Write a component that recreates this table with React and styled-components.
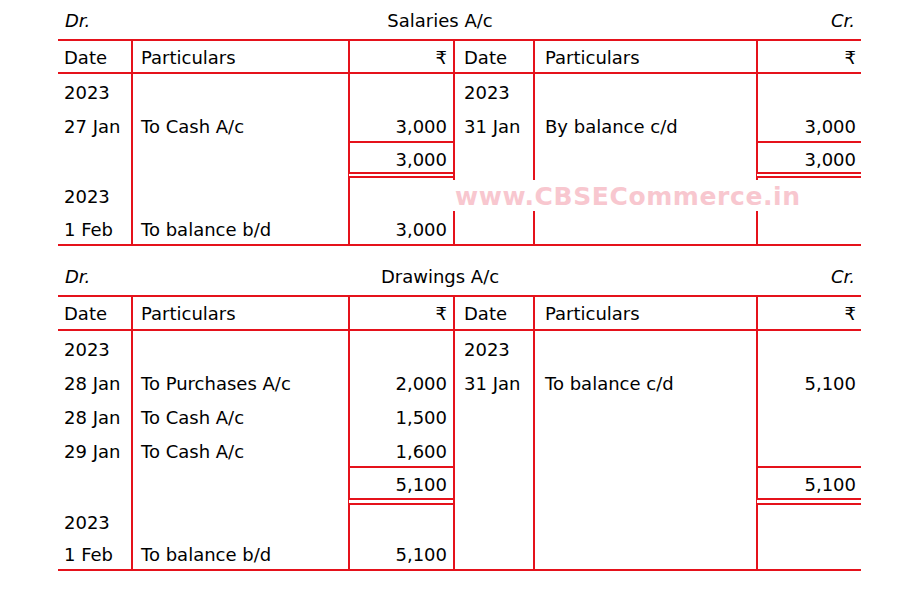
import React from 'react'
import styled, { createGlobalStyle } from 'styled-components'

const RED = '#e5121b'

const GlobalStyle = createGlobalStyle`
  html, body {
    margin: 0;
    padding: 0;
    background: #fff;
  }
  body {
    font-family: 'DejaVu Sans', 'Noto Sans', sans-serif;
    color: #000;
  }
`

const Page = styled.div`
  width: 912px;
  height: 589px;
  box-sizing: border-box;
  padding: 2px 0 0 58px;
  background: #fff;
`

const Ledger = styled.section`
  width: 803px;
  margin-bottom: ${p => p.$gap || 0}px;
`

const TitleRow = styled.div`
  display: grid;
  grid-template-columns: 1fr auto 1fr;
  align-items: center;
  height: 37px;
  font-size: 18px;
`

const SideLabel = styled.span`
  font-style: italic;
  padding: ${p => (p.$right ? '0 6px 0 0' : '0 0 0 7px')};
  text-align: ${p => (p.$right ? 'right' : 'left')};
`

const Title = styled.span`
  padding-right: 39px;
`

const Grid = styled.div`
  position: relative;
  display: grid;
  grid-template-columns: 73px 217px 105px 80px 223px 105px;
  grid-template-rows: ${p => p.$rows.map(r => r + 'px').join(' ')};
  border-top: 2px solid ${RED};
  border-bottom: 2px solid ${RED};
  font-size: 18px;
`

const Cell = styled.div`
  box-sizing: border-box;
  display: flex;
  align-items: center;
  justify-content: ${p => (p.$num ? 'flex-end' : 'flex-start')};
  padding: ${p => (p.$head ? 1 : 3)}px ${p => p.$pr || 0}px 0 ${p => p.$pl || 0}px;
  border-left: ${p => (p.$first ? 'none' : `2px solid ${RED}`)};
  border-top: ${p => (p.$total ? `2px solid ${RED}` : 'none')};
  border-bottom: ${p =>
    p.$head ? `2px solid ${RED}` : p.$total ? `${p.$double}px double ${RED}` : 'none'};
  white-space: nowrap;
`

// sits over the table lines, so it blanks them with a white box
const Watermark = styled.div`
  position: absolute;
  left: 394px;
  top: 139px;
  box-sizing: border-box;
  height: 31px;
  padding: 3px 3px 0;
  line-height: 28px;
  background: #fff;
  color: #f8c7cf;
  font-family: 'DejaVu Sans', sans-serif;
  font-weight: bold;
  font-size: 25px;
  letter-spacing: 0.6px;
`

// column paddings / alignment, left side then right side
const COLS = [
  { pl: 6 },
  { pl: 8 },
  { pr: 6, num: true },
  { pl: 9 },
  { pl: 10 },
  { pr: 5, num: true },
]

const HEADER = ['Date', 'Particulars', '₹', 'Date', 'Particulars', '₹']

const salaries = {
  title: 'Salaries A/c',
  double: 6,
  rows: [
    { h: 33, head: true, cells: HEADER },
    { h: 34, cells: ['2023', '', '', '2023', '', ''] },
    { h: 33, cells: ['27 Jan', 'To Cash A/c', '3,000', '31 Jan', 'By balance c/d', '3,000'] },
    { h: 37, total: true, cells: ['', '', '3,000', '', '', '3,000'] },
    { h: 33, cells: ['2023', '', '', '', '', ''] },
    { h: 33, cells: ['1 Feb', 'To balance b/d', '3,000', '', '', ''] },
  ],
}

const drawings = {
  title: 'Drawings A/c',
  double: 7,
  rows: [
    { h: 34, head: true, cells: HEADER },
    { h: 34, cells: ['2023', '', '', '2023', '', ''] },
    { h: 34, cells: ['28 Jan', 'To Purchases A/c', '2,000', '31 Jan', 'To balance c/d', '5,100'] },
    { h: 34, cells: ['28 Jan', 'To Cash A/c', '1,500', '', '', ''] },
    { h: 33, cells: ['29 Jan', 'To Cash A/c', '1,600', '', '', ''] },
    { h: 39, total: true, cells: ['', '', '5,100', '', '', '5,100'] },
    { h: 32, cells: ['2023', '', '', '', '', ''] },
    { h: 32, cells: ['1 Feb', 'To balance b/d', '5,100', '', '', ''] },
  ],
}

function Account({ data, gap, children }) {
  return (
    <Ledger $gap={gap}>
      <TitleRow>
        <SideLabel>Dr.</SideLabel>
        <Title>{data.title}</Title>
        <SideLabel $right>Cr.</SideLabel>
      </TitleRow>
      <Grid $rows={data.rows.map(r => r.h)}>
        {data.rows.map((row, ri) =>
          row.cells.map((text, ci) => {
            const col = COLS[ci]
            return (
              <Cell
                key={ri + '-' + ci}
                $first={ci === 0}
                $head={row.head}
                $total={row.total && col.num}
                $double={data.double}
                $num={col.num}
                $pl={col.pl}
                $pr={col.pr}
              >
                {text}
              </Cell>
            )
          })
        )}
        {children}
      </Grid>
    </Ledger>
  )
}

export default function App() {
  return (
    <>
      <GlobalStyle />
      <Page>
        <Account data={salaries} gap={12}>
          <Watermark>www.CBSECommerce.in</Watermark>
        </Account>
        <Account data={drawings} />
      </Page>
    </>
  )
}
